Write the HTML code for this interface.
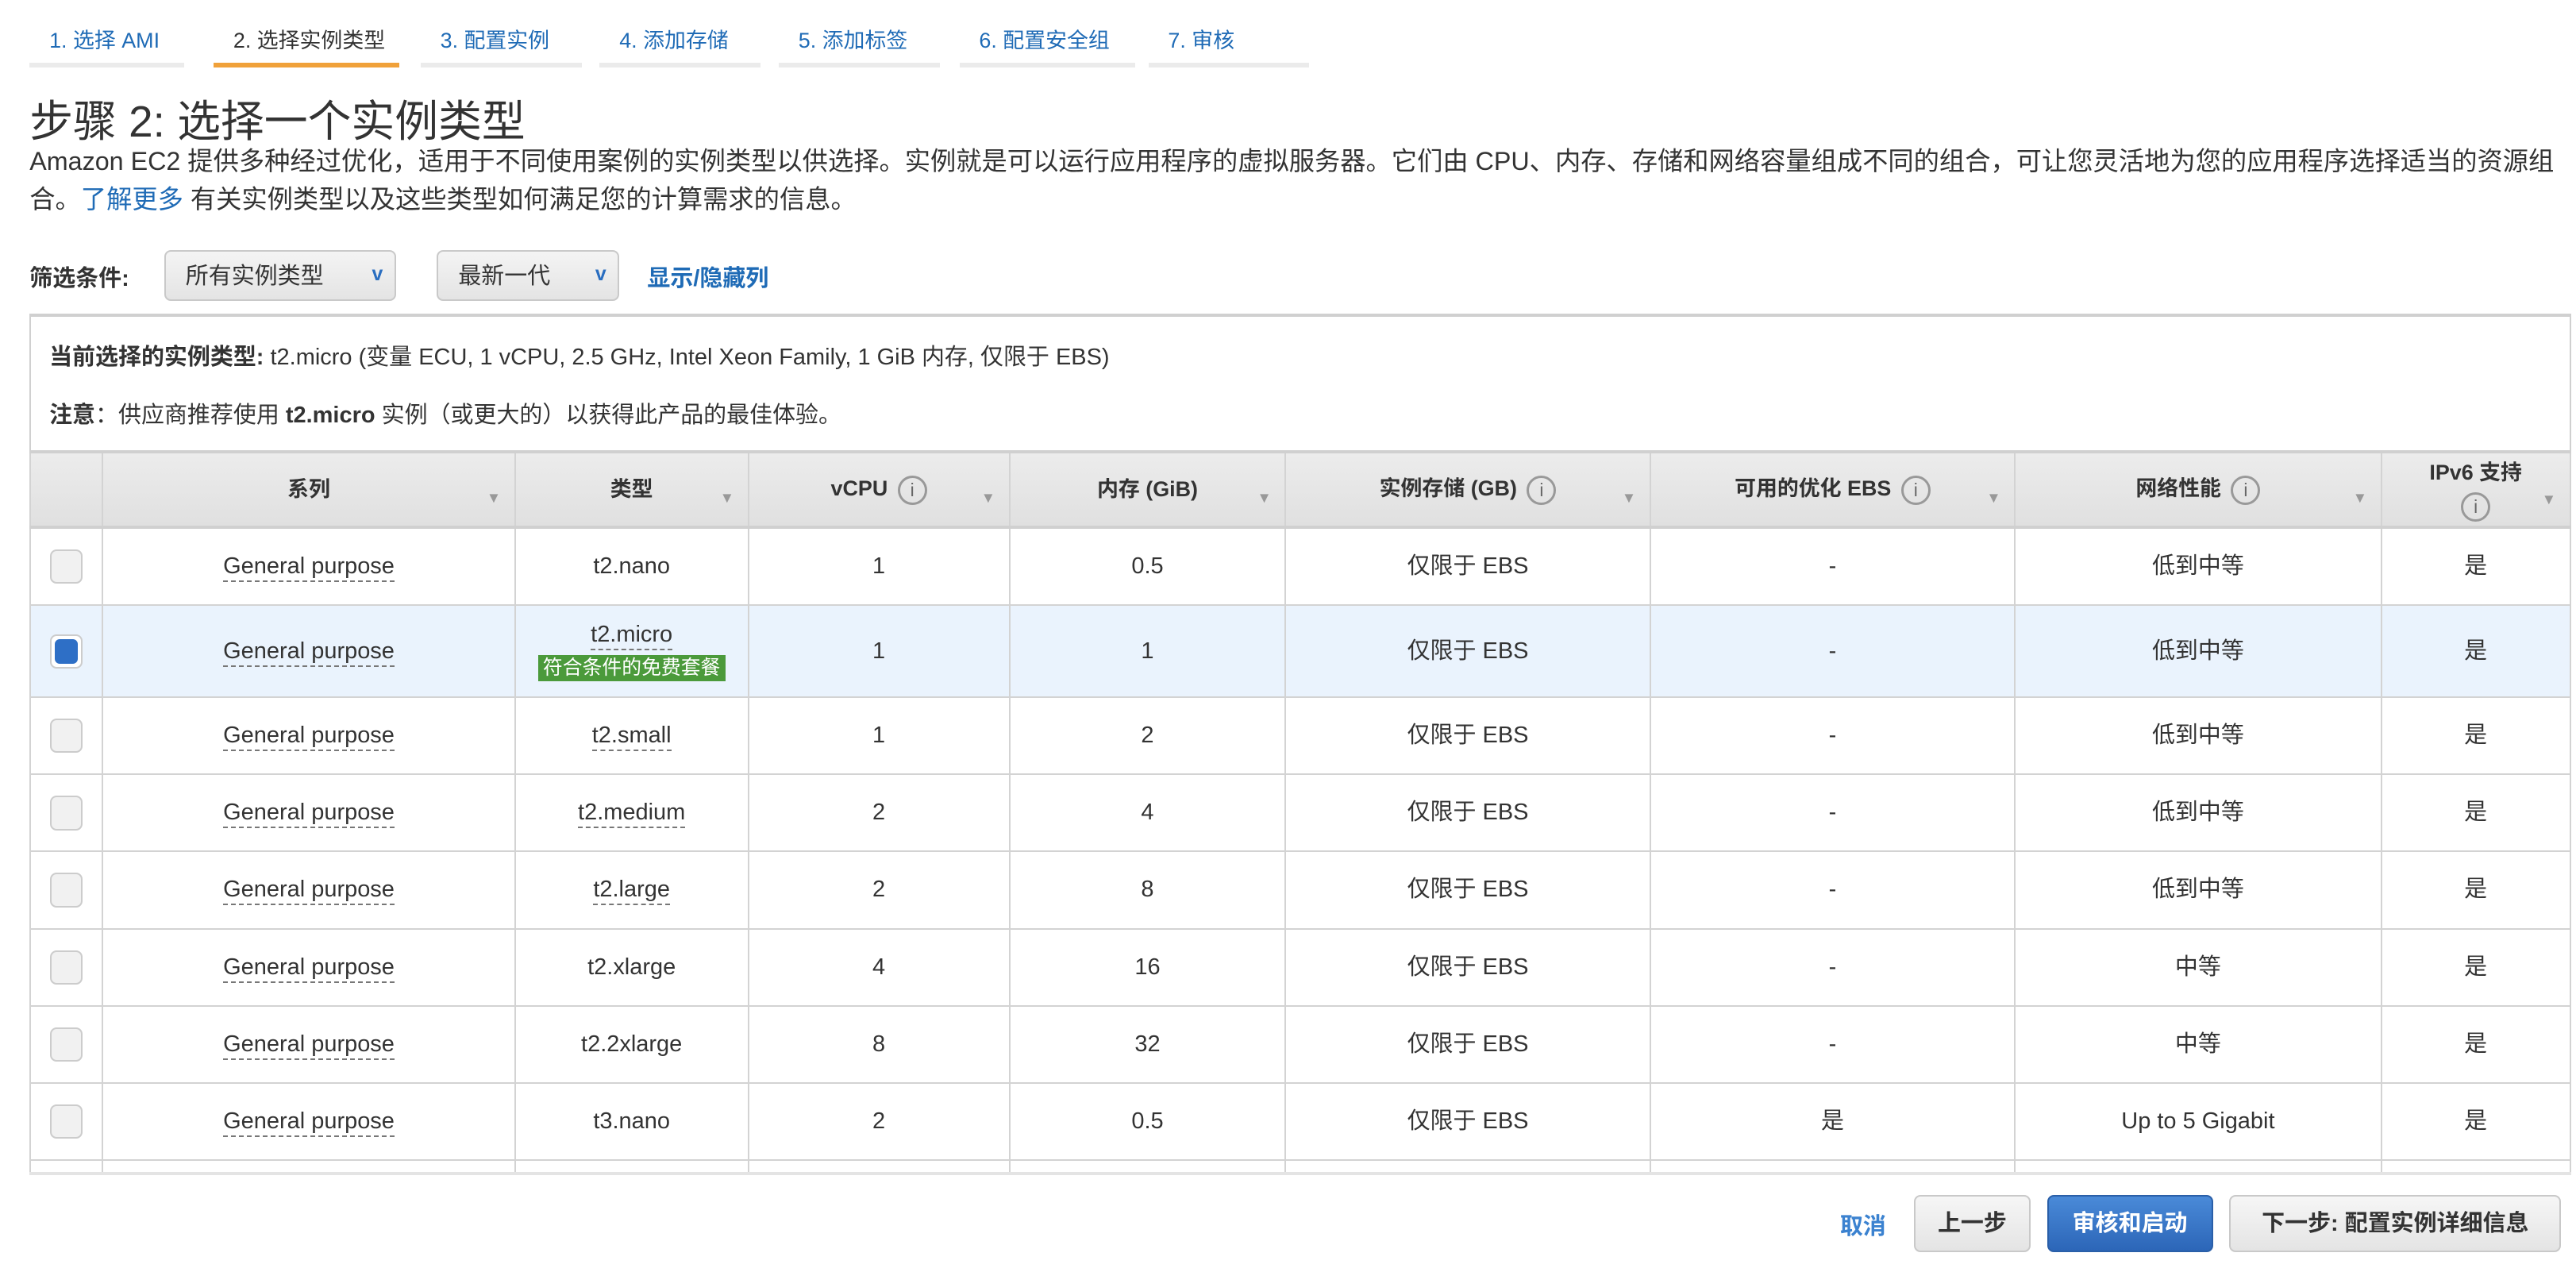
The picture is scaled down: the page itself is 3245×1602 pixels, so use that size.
<!DOCTYPE html>
<html><head><meta charset="utf-8"><style>
html,body{margin:0;padding:0;background:#fff}
body{width:1568px;height:773px;zoom:2.0695;position:relative;overflow:hidden;font-family:"Liberation Sans","Noto Sans CJK SC",sans-serif;color:#333;font-size:14px}
.a{position:absolute}
.tab{position:absolute;top:14px;font-size:13px;color:#1f6bb6;height:27px;border-bottom:3px solid #ebebeb;box-sizing:border-box;padding-left:12px}
.tab.on{border-bottom-color:#f0a13a;color:#333}
.blue{color:#1f6bb6}
.dd{position:absolute;top:152px;height:31px;border:1px solid #c9c9c9;border-radius:4px;background:linear-gradient(#f4f4f4,#e4e4e4);box-sizing:border-box;font-size:14px;line-height:30px;padding-left:12px}
.dd i{position:absolute;right:7px;top:-1px;font-style:normal;color:#2a6ec0;font-size:12px;font-weight:bold}
table{position:absolute;left:18px;top:274px;border-collapse:collapse;table-layout:fixed;width:1546px}
td,th{border:1px solid #d3d3d3;text-align:center;padding:0;font-size:14px;position:relative;line-height:18px;vertical-align:middle}
th{height:44px;background:linear-gradient(#ececec,#e0e0e0);font-size:13px;font-weight:bold;color:#333;border-top:2px solid #d0d0d0;border-bottom:2px solid #d0d0d0}
th s{position:absolute;right:8px;top:18px;text-decoration:none;color:#999;font-size:9px}
.ic{display:inline-block;width:15px;height:15px;border:1.5px solid #999;border-radius:50%;font-size:11px;line-height:15px;color:#666;font-weight:normal;vertical-align:middle;margin-left:6px}
td{height:46px}
.u{border-bottom:1px dashed #777;padding-bottom:1px}
.cb{display:inline-block;width:18px;height:19px;border:1px solid #ccc;border-radius:4px;background:#f1f1f1;vertical-align:middle}
.sel td{background:#eaf3fd;height:55px}
.sel .cb{background:#fff;position:relative}
.sel .cb:after{content:"";position:absolute;left:2px;top:2px;width:14px;height:15px;border-radius:3px;background:#2e6fc6}
.free{display:inline-block;background:#4b9a3b;color:#fff;font-size:12px;padding:0 3px;line-height:16px;margin-top:3px}
.btn{position:absolute;top:727px;height:35px;border:1px solid #c9c9c9;border-radius:4px;background:linear-gradient(#f6f6f6,#e4e4e4);box-sizing:border-box;font-weight:bold;font-size:14px;line-height:33px;text-align:center}
</style></head><body>
<div class="tab" style="left:18px;width:94px">1. 选择 AMI</div>
<div class="tab on" style="left:130px;width:113px">2. 选择实例类型</div>
<div class="tab" style="left:256px;width:98px">3. 配置实例</div>
<div class="tab" style="left:365px;width:98px">4. 添加存储</div>
<div class="tab" style="left:474px;width:98px">5. 添加标签</div>
<div class="tab" style="left:584px;width:107px">6. 配置安全组</div>
<div class="tab" style="left:699px;width:98px">7. 审核</div>
<div class="a" style="left:18px;top:52px;font-size:26.5px">步骤 2: 选择一个实例类型</div>
<div class="a" style="left:18px;top:87px;line-height:23px;width:1560px;font-size:15.6px;white-space:nowrap">Amazon EC2 提供多种经过优化，适用于不同使用案例的实例类型以供选择。实例就是可以运行应用程序的虚拟服务器。它们由 CPU、内存、存储和网络容量组成不同的组合，可让您灵活地为您的应用程序选择适当的资源组<br>合。<span class="blue">了解更多</span> 有关实例类型以及这些类型如何满足您的计算需求的信息。</div>
<div class="a" style="left:18px;top:158px;font-weight:bold">筛选条件:</div>
<div class="dd" style="left:100px;width:141px">所有实例类型<i>v</i></div>
<div class="dd" style="left:266px;width:111px">最新一代<i>v</i></div>
<div class="a blue" style="left:394px;top:158px;font-weight:bold">显示/隐藏列</div>
<div class="a" style="left:18px;top:191px;width:1547px;height:530px;border:1px solid #d0d0d0;border-top:2px solid #d0d0d0;box-sizing:border-box"></div>
<div class="a" style="left:30px;top:206px"><b>当前选择的实例类型:</b> t2.micro (变量 ECU, 1 vCPU, 2.5 GHz, Intel Xeon Family, 1 GiB 内存, 仅限于 EBS)</div>
<div class="a" style="left:30px;top:241px"><b>注意</b>：供应商推荐使用 <b>t2.micro</b> 实例（或更大的）以获得此产品的最佳体验。</div>
<table>
<colgroup><col style="width:44px"><col style="width:251px"><col style="width:142px"><col style="width:159px"><col style="width:168px"><col style="width:222px"><col style="width:222px"><col style="width:223px"><col style="width:115px"></colgroup>
<tr><th></th><th>系列<s>▼</s></th><th>类型<s>▼</s></th><th>vCPU<span class="ic">i</span><s>▼</s></th><th>内存 (GiB)<s>▼</s></th><th>实例存储 (GB)<span class="ic">i</span><s>▼</s></th><th>可用的优化 EBS<span class="ic">i</span><s>▼</s></th><th>网络性能<span class="ic">i</span><s>▼</s></th><th style="line-height:20px">IPv6 支持<br><span class="ic" style="margin:0">i</span><s>▼</s></th></tr>
<tr><td><span class="cb"></span></td><td><span class="u">General purpose</span></td><td>t2.nano</td><td>1</td><td>0.5</td><td>仅限于 EBS</td><td>-</td><td>低到中等</td><td>是</td></tr>
<tr class="sel"><td><span class="cb"></span></td><td><span class="u">General purpose</span></td><td><span class="u">t2.micro</span><br><span class="free">符合条件的免费套餐</span></td><td>1</td><td>1</td><td>仅限于 EBS</td><td>-</td><td>低到中等</td><td>是</td></tr>
<tr><td><span class="cb"></span></td><td><span class="u">General purpose</span></td><td><span class="u">t2.small</span></td><td>1</td><td>2</td><td>仅限于 EBS</td><td>-</td><td>低到中等</td><td>是</td></tr>
<tr><td><span class="cb"></span></td><td><span class="u">General purpose</span></td><td><span class="u">t2.medium</span></td><td>2</td><td>4</td><td>仅限于 EBS</td><td>-</td><td>低到中等</td><td>是</td></tr>
<tr><td><span class="cb"></span></td><td><span class="u">General purpose</span></td><td><span class="u">t2.large</span></td><td>2</td><td>8</td><td>仅限于 EBS</td><td>-</td><td>低到中等</td><td>是</td></tr>
<tr><td><span class="cb"></span></td><td><span class="u">General purpose</span></td><td>t2.xlarge</td><td>4</td><td>16</td><td>仅限于 EBS</td><td>-</td><td>中等</td><td>是</td></tr>
<tr><td><span class="cb"></span></td><td><span class="u">General purpose</span></td><td>t2.2xlarge</td><td>8</td><td>32</td><td>仅限于 EBS</td><td>-</td><td>中等</td><td>是</td></tr>
<tr><td><span class="cb"></span></td><td><span class="u">General purpose</span></td><td>t3.nano</td><td>2</td><td>0.5</td><td>仅限于 EBS</td><td>是</td><td>Up to 5 Gigabit</td><td>是</td></tr>
<tr><td style="height:8px"></td><td></td><td></td><td></td><td></td><td></td><td></td><td></td><td></td></tr>
</table>
<div class="a" style="left:10px;top:714px;width:1560px;height:60px;background:#fff"></div>
<div class="a" style="left:18px;top:713px;width:1547px;height:2px;background:#e4e4e4"></div>
<div class="a blue" style="left:1120px;top:735px;font-weight:bold;color:#3b82d0">取消</div>
<div class="btn" style="left:1165px;width:71px">上一步</div>
<div class="btn" style="left:1246px;width:101px;background:linear-gradient(#4a8ad8,#2c66b8);border-color:#2a5fa8;color:#fff">审核和启动</div>
<div class="btn" style="left:1357px;width:202px">下一步: 配置实例详细信息</div>
</body></html>
